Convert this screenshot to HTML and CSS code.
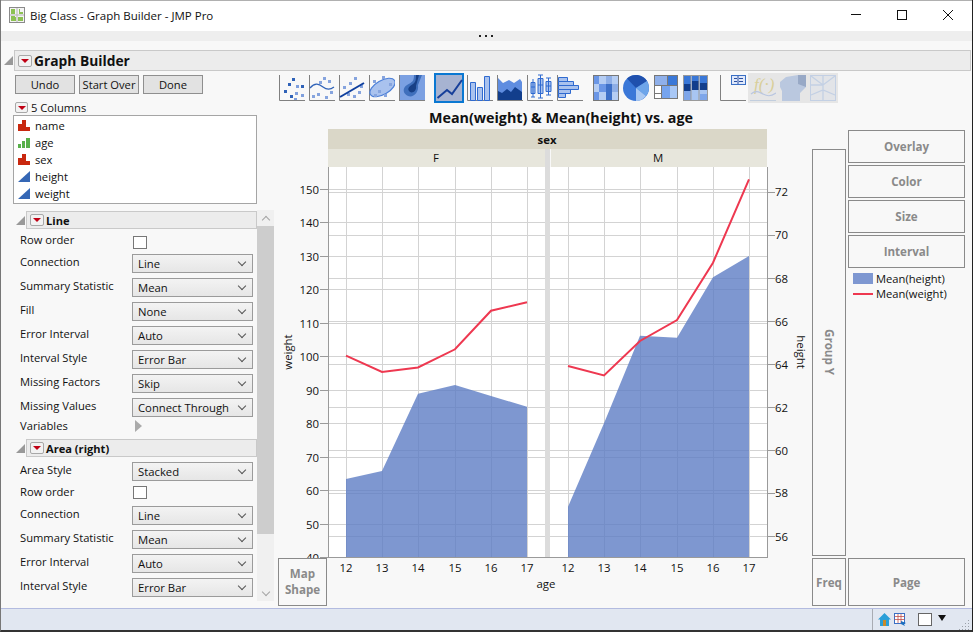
FILE: index.html
```html
<!DOCTYPE html>
<html lang="en">
<head>
<meta charset="utf-8">
<title>Big Class - Graph Builder - JMP Pro</title>
<link rel="stylesheet" href="styles.css">
</head>
<body>
<div class="win">
  <header class="titlebar">
    <svg class="appicon" width="16" height="16" viewBox="0 0 16 16"><rect x=".5" y=".5" width="15" height="15" fill="#f4f4f4" stroke="#8a8a8a"/><path d="M2 2h4v5H2zM10 2h1v3h3v2h-4zM2 9h4v1h1v4H2zM9 10h5v4H9z" fill="#8cc152"/><path d="M8 1v14M1 8h14" stroke="#b5b5b5"/></svg>
    <span class="wintitle">Big Class - Graph Builder - JMP Pro</span>
    <div class="winctl">
      <svg width="12" height="12" viewBox="0 0 12 12"><path d="M1 5.500H11" stroke="#111"/></svg>
      <svg width="12" height="12" viewBox="0 0 12 12"><rect x="1.500" y="1.500" width="9" height="9" fill="none" stroke="#111"/></svg>
      <svg width="12" height="12" viewBox="0 0 12 12"><path d="M1 1L11 11M11 1L1 11" stroke="#111"/></svg>
    </div>
  </header>
  <div class="dotsbar"><svg width="16" height="3" viewBox="0 0 16 3"><path d="M0 0h2v2H0zM6 0h2v2H6zM12 0h2v2h-2z" fill="#222"/></svg></div>

  <main class="content">
    <div class="outline-row">
      <span class="disc"></span>
      <div class="gbhead"><span class="menu"></span><b>Graph Builder</b></div>
    </div>
    <div class="work">
      <section class="left">
        <div class="btns"><button class="btn">Undo</button><button class="btn">Start Over</button><button class="btn">Done</button></div>
        <div class="colshead"><span class="menu small"></span><span>5 Columns</span></div>
        <ul class="collist">
          <li><svg class="ci" viewBox="0 0 12 11"><path d="M0 4h4V0h4v7h4v4H0z" fill="#c9280f"/></svg><span>name</span></li>
          <li><svg class="ci" viewBox="0 0 12 11"><path d="M0 7h3v4H0zM4 4h3v7H4zM8 1h4v10H8z" fill="#58b04a"/></svg><span>age</span></li>
          <li><svg class="ci" viewBox="0 0 12 11"><path d="M0 4h4V0h4v7h4v4H0z" fill="#c9280f"/></svg><span>sex</span></li>
          <li><svg class="ci" viewBox="0 0 12 11"><path d="M0 11L12 0v11z" fill="#3567b5"/></svg><span>height</span></li>
          <li><svg class="ci" viewBox="0 0 12 11"><path d="M0 11L12 0v11z" fill="#3567b5"/></svg><span>weight</span></li>
        </ul>
        <div class="panelwrap">
          <div class="panel">
            <div class="sechead"><span class="disc"></span><div class="sectitle"><span class="menu"></span><b>Line</b></div></div>
            <div class="rows first">
              <div class="row check"><label>Row order</label><span class="cb"></span></div>
              <div class="row"><label>Connection</label><div class="combo">Line</div></div>
              <div class="row"><label>Summary Statistic</label><div class="combo">Mean</div></div>
              <div class="row"><label>Fill</label><div class="combo">None</div></div>
              <div class="row"><label>Error Interval</label><div class="combo">Auto</div></div>
              <div class="row"><label>Interval Style</label><div class="combo">Error Bar</div></div>
              <div class="row"><label>Missing Factors</label><div class="combo">Skip</div></div>
              <div class="row"><label>Missing Values</label><div class="combo">Connect Through</div></div>
              <div class="row vars"><label>Variables</label><span class="play"></span></div>
            </div>
            <div class="sechead"><span class="disc"></span><div class="sectitle"><span class="menu"></span><b>Area (right)</b></div></div>
            <div class="rows second">
              <div class="row"><label>Area Style</label><div class="combo">Stacked</div></div>
              <div class="row check2"><label>Row order</label><span class="cb"></span></div>
              <div class="row"><label>Connection</label><div class="combo">Line</div></div>
              <div class="row"><label>Summary Statistic</label><div class="combo">Mean</div></div>
              <div class="row"><label>Error Interval</label><div class="combo">Auto</div></div>
              <div class="row"><label>Interval Style</label><div class="combo">Error Bar</div></div>
            </div>
          </div>
          <div class="scroll"><span class="sb-up"></span><span class="sb-thumb"></span><span class="sb-track"></span><span class="sb-down"></span></div>
        </div>
      </section>

      <section class="center">
        <div class="toolbar">
          <svg class="ico" viewBox="0 0 26 28"><path d="M.5 2V27.500H26" class="ax"/><path d="M13 5h3v3h-3zM9 10h3v3H9zM22 12h3v3h-3zM5 17h3v3H5zM11 22h3v3h-3z" fill="#2f62b8"/><path d="M17 12h3v3h-3zM16 19h3v3h-3zM22 21h3v3h-3zM15 25h3v2h-3z" fill="#7f9fdd"/></svg>
          <svg class="ico" viewBox="0 0 26 28"><path d="M.5 2V27.500H26" class="ax"/><path d="M14 4h3v3h-3zM19 7h3v3h-3zM8 20h3v3H8zM3 22h3v3H3zM16 23h3v3h-3zM10 8h3v3h-3zM21 18h3v3h-3z" fill="#86a4de"/><path d="M1 15C6 9 10 11 14 14S21 17 25 14" fill="none" stroke="#2f62b8" stroke-width="1.200"/></svg>
          <svg class="ico" viewBox="0 0 26 28"><path d="M.5 2V27.500H26" class="ax"/><path d="M15 4h3v3h-3zM10 9h3v3h-3zM4 13h3v3H4zM21 12h3v3h-3zM8 20h3v3H8zM14 22h3v3h-3zM19 18h3v3h-3z" fill="#86a4de"/><path d="M1 24L25 10" stroke="#0e3f9e" stroke-width="2"/></svg>
          <svg class="ico" viewBox="0 0 26 28"><path d="M.5 2V27.500H26" class="ax"/><ellipse cx="13.500" cy="14.500" rx="14" ry="7" transform="rotate(-30 13.500 14.500)" fill="#a9c2ee" stroke="#4b7fd8" stroke-width="1.200"/><path d="M13 3h3v3h-3zM4 7h3v3H4zM20 10h3v3h-3zM9 17h3v3H9zM15 21h3v3h-3zM5 21h3v3H5z" fill="#86a4de"/></svg>
          <svg class="ico" viewBox="0 0 26 28"><rect y="2" width="26" height="26" fill="#7ba0e2"/><path d="M0 27.500H26M.5 2V28" class="ax"/><path d="M15 2h8L19 12C20 20 14 25 9 23S3 15 8 12 15 9 15 2Z" fill="#3f6fbc"/><path d="M17 2h3L17 13C18 19 12 21 10 18S11 13 14 11 17 6 17 2Z" fill="#173f86"/></svg>
          <svg class="ico sel" viewBox="0 0 30 30"><rect x="1" y="1" width="28" height="28" fill="#a7b3d1" stroke="#0a78d2" stroke-width="2"/><path d="M3.500 25L13 17L18 21L28 7" fill="none" stroke="#173f9a" stroke-width="2"/></svg>
          <svg class="ico" viewBox="0 0 26 28"><path d="M.5 2V27.500H26" class="ax"/><path d="M3.500 9.500h5v18h-5zM10.500 14.500h5v13h-5zM17.500 3.500h5v24h-5z" fill="#a9c2ee" stroke="#2f6ad0"/></svg>
          <svg class="ico" viewBox="0 0 26 28"><path d="M1 5L6 10L12 7L17 10L23 6L25 9V27H1Z" fill="#5f8de0"/><path d="M1 18L5 20L10 16L14 19L18 14L25 19V27H1Z" fill="#123e8c"/><path d="M.5 2V27.500H26" class="ax"/></svg>
          <svg class="ico" viewBox="0 0 26 28"><path d="M.5 2V27.500H26" class="ax"/><path d="M4 9.500h4v11H4zM11 5.500h5v15h-5zM19 8.500h5v10h-5z" fill="#a9c2ee" stroke="#2f6ad0"/><path d="M6 6V24M13.500 2V25M21.500 5V22M4 24h4M11 2h5M11 25h5M19 5h5M19 22h5M4 14h4M11 12h5M19 13h5" stroke="#2f6ad0" fill="none"/></svg>
          <svg class="ico" viewBox="0 0 26 28"><path d="M.5 2V27.500H26" class="ax"/><path d="M1.500 4.500h9v4h-9zM1.500 8.500h15v4h-15zM1.500 12.500h20v4h-20zM1.500 16.500h12v4h-12zM1.500 20.500h7v4h-7z" fill="#a9c2ee" stroke="#2f6ad0"/></svg>
          <svg class="ico gap" viewBox="0 0 26 28"><path d="M0 2h6v9H0z" fill="#6a96e6"/><path d="M6 2h7v9H6zM19 2h7v9h-7zM0 11h6v8H0zM6 19h7v9H6zM19 19h7v9h-7z" fill="#b5cdf3"/><path d="M13 2h6v9h-6zM19 11h7v8h-7z" fill="#8eaee6"/><path d="M6 11h7v8H6zM0 19h6v9H0z" fill="#6a96e6"/><path d="M13 11h6v17h-6z" fill="#3d70c8"/><rect x=".5" y="2.500" width="25" height="25" fill="none" stroke="#777"/></svg>
          <svg class="ico" viewBox="0 0 26 28"><circle cx="13" cy="15" r="13" fill="#3b78d8"/><path d="M13 15L4 5.500A13 13 0 0 1 24 8Z" fill="#1f50ad"/><path d="M13 15L24 8A13 13 0 0 1 23 23Z" fill="#6da5ea"/><path d="M13 15L23 23A13 13 0 0 1 13 28Z" fill="#a8c8f3"/></svg>
          <svg class="ico tree" viewBox="0 0 24 28"><rect y="2" width="24" height="24" fill="#777"/><path d="M1 3h12v9H1z" fill="#8fb0ea"/><path d="M14 3h9v9h-9z" fill="#3a78d8"/><path d="M8 13h15v12H8z" fill="#a9c8f6"/><path d="M8 13h8v12H8z" fill="#76a4ee"/><path d="M1 13h6v7H1zM1 21h6v4H1z" fill="#fff"/></svg>
          <svg class="ico tree2" viewBox="0 0 25 28"><rect y="2" width="25" height="26" fill="#a8c5f2"/><path d="M1 3h7v8H1zM9 3h7v5H9zM17 3h7v7h-7z" fill="#3a78d8"/><path d="M1 11h7v7H1zM9 8h7v9H9zM17 10h7v7h-7z" fill="#123e8c"/><path d="M1 18h7v9H1zM17 21h7v6h-7z" fill="#7ea6ea"/><path d="M8 2v26M16 2v26M0 2.500H25M.5 2v26M24.500 2v26M0 27.500h25" stroke="#9a9a9a"/></svg>
          <svg class="ico gap2" viewBox="0 0 26 28"><path d="M.5 2V27.500H26" class="ax"/><rect x="11.500" y="2.500" width="14" height="9" fill="#dfe8fa" stroke="#3a6fc4"/><path d="M14 5.500h3M14 8.500h3M19 5.500h4M19 8.500h4M18 3v8" stroke="#2a4fa0"/></svg>
          <div class="disabled">
            <svg class="ico" viewBox="0 0 26 28"><text x="4" y="17" class="fx">f(·)</text><path d="M1 21C6 17 9 19 13 21S20 24 26 20" fill="none" stroke="#b9c6e0" stroke-width="1.200"/><path d="M0 27.500H26" stroke="#c2cede"/></svg>
            <svg class="ico" viewBox="0 0 26 28"><path d="M6 4L18 2H26V14L20 20V28H2V18L0 14V9Z" fill="#bac8df"/><path d="M18 2H26V14L18 11Z" fill="#98a9c6"/></svg>
            <svg class="ico" viewBox="0 0 26 28"><rect x=".5" y="2.500" width="25" height="25" fill="#e2e4e8" stroke="#c3d0e4"/><path d="M1 3L13 12L25 3M1 22L13 17L25 22M1 12L13 12M13 2V28" stroke="#c3d0e4" fill="none" stroke-width="1.300"/></svg>
          </div>
        </div>
        <h1 class="gtitle">Mean(weight) &amp; Mean(height) vs. age</h1>
        <div class="chartstack">
          <svg class="chart" viewBox="278 129 532 479" width="532" height="479">
            <rect x="328" y="129" width="439" height="20" fill="#dad7c8"/>
            <rect x="328" y="149" width="217" height="18" fill="#e7e6dc"/>
            <rect x="551" y="149" width="216" height="18" fill="#e7e6dc"/>
            <text x="547" y="143.500" class="t b m">sex</text>
            <text x="436" y="162" class="t m">F</text>
            <text x="658" y="162" class="t m">M</text>
            <rect x="329" y="167" width="438" height="390" fill="#fff"/>
            <path class="grid" d="M320 189.500H767M320 222.500H767M320 256.500H767M320 289.500H767M320 323.500H767M320 356.500H767M320 390.500H767M320 423.500H767M320 457.500H767M320 490.500H767M320 524.500H767
            M329 192.500H775M329 235.500H775M329 278.500H775M329 321.500H775M329 364.500H775M329 407.500H775M329 450.500H775M329 493.500H775M329 536.500H775
            M346.500 167V557M382.500 167V557M418.500 167V557M455.500 167V557M491.500 167V557M527.500 167V557M568.500 167V557M604.500 167V557M640.500 167V557M677.500 167V557M713.500 167V557M749.500 167V557"/>
            <path class="area" d="M346 479L382 471L418 393.700L455 385L491 396L527 406.700V557H346Z"/>
            <path class="area" d="M568 506.700L604 423.300L640 335.700L677 337.700L713 277.300L749 256V557H568Z"/>
            <path class="redl" d="M346 355.700L382 372L418 367.500L455 349.300L491 310.700L527 302.300"/>
            <path class="redl" d="M568 366L604 375.500L640 341L677 320L713 262.700L749 179.300"/>
            <rect x="545" y="149" width="5" height="408" fill="#dcdcdc"/>
            <path class="axis" d="M328.500 167V557.500H767.500V167"/>
            <path class="axis" d="M320 189.500H328M320 222.500H328M320 256.500H328M320 289.500H328M320 323.500H328M320 356.500H328M320 390.500H328M320 423.500H328M320 457.500H328M320 490.500H328M320 524.500H328M320 557.500H328M768 192.500H775M768 235.500H775M768 278.500H775M768 321.500H775M768 364.500H775M768 407.500H775M768 450.500H775M768 493.500H775M768 536.500H775"/>
            <g class="t e">
              <text x="319" y="194">150</text><text x="319" y="227">140</text><text x="319" y="261">130</text><text x="319" y="294">120</text><text x="319" y="328">110</text><text x="319" y="361">100</text><text x="319" y="395">90</text><text x="319" y="428">80</text><text x="319" y="462">70</text><text x="319" y="495">60</text><text x="319" y="529">50</text><text x="319" y="562">40</text>
            </g>
            <g class="t">
              <text x="775" y="196">72</text><text x="775" y="239">70</text><text x="775" y="283">68</text><text x="775" y="326">66</text><text x="775" y="369">64</text><text x="775" y="412">62</text><text x="775" y="455">60</text><text x="775" y="497">58</text><text x="775" y="541">56</text>
            </g>
            <g class="t m">
              <text x="346" y="572">12</text><text x="382" y="572">13</text><text x="418" y="572">14</text><text x="455" y="572">15</text><text x="491" y="572">16</text><text x="527" y="572">17</text>
              <text x="568" y="572">12</text><text x="604" y="572">13</text><text x="640" y="572">14</text><text x="677" y="572">15</text><text x="713" y="572">16</text><text x="749" y="572">17</text>
              <text x="546" y="588">age</text>
              <text transform="translate(292 352) rotate(-90)">weight</text>
              <text transform="translate(797 352) rotate(90)">height</text>
            </g>
          </svg>
          <div class="zone mapshape">Map<br>Shape</div>
        </div>
      </section>

      <aside class="right">
        <div class="zone groupy"><span>Group Y</span></div>
        <div class="rightstack">
          <div class="zone rz">Overlay</div>
          <div class="zone rz">Color</div>
          <div class="zone rz">Size</div>
          <div class="zone rz">Interval</div>
          <div class="legend">
            <div class="lg"><i class="sw"></i><span>Mean(height)</span></div>
            <div class="lg"><i class="ln"></i><span>Mean(weight)</span></div>
          </div>
        </div>
        <div class="zone">Freq</div>
        <div class="zone">Page</div>
      </aside>
    </div>
  </main>

  <footer class="status">
    <div class="stat-right">
      <svg width="13" height="13" viewBox="0 0 13 13"><path d="M6.500 0L13 6.500H11V13H2V6.500H0Z" fill="#2a9fd8"/><path d="M5 7h3v6H5z" fill="#c98a2a"/></svg>
      <svg width="13" height="13" viewBox="0 0 13 13"><rect x=".5" y=".5" width="10" height="10" fill="#fff" stroke="#3a6fc4"/><path d="M.5 3.500h10M.5 6.500h10M4 1v9M7 1v9" stroke="#c0504d" stroke-width=".8"/><path d="M7 8l5 2-2 1 1 2-4-2z" fill="#1d6fc0"/></svg>
      <span class="whitebox"></span>
      <span class="drop"></span>
      <svg class="grip" width="12" height="10" viewBox="0 0 12 10"><path d="M10 0h1v1h-1zM7 3h1v1H7zM10 3h1v1h-1zM4 6h1v1H4zM7 6h1v1H7zM10 6h1v1h-1zM1 9h1v1H1zM4 9h1v1H4zM7 9h1v1H7zM10 9h1v1h-1z" fill="#9aa0a8"/></svg>
    </div>
  </footer>
</div>
</body>
</html>
```
FILE: styles.css
```css
* { box-sizing: border-box; }
html, body { margin: 0; padding: 0; background: #444; }
body { font-family: "Open Sans", "Noto Sans", sans-serif; font-size: 11.2px; color: #111; }
.win {
  width: 973px; height: 632px; display: flex; flex-direction: column; overflow: hidden;
  background: #f8f8f8; border-left: 1px solid #777; border-right: 1px solid #222; border-bottom: 2px solid #333;
}
.titlebar { height: 31px; flex: none; background: #fff; border-top: 1px solid #b0b0b0; display: flex; align-items: center; padding-left: 8px; }
.appicon { margin-top: -2px; }
.wintitle { margin-left: 5px; margin-top: -1px; font-size: 11.5px; }
.winctl { margin-left: auto; display: flex; gap: 34px; margin-right: 18px; margin-top: -3px; }
.dotsbar { height: 10px; flex: none; background: #eee; display: flex; justify-content: center; align-items: center; }

.content { flex: 1; min-height: 0; padding-top: 9px; display: flex; flex-direction: column; }
.outline-row { display: flex; align-items: center; height: 21px; padding-left: 3px; padding-right: 1px; }
.disc { width: 0; height: 0; flex: none; display: block; border-style: solid; border-width: 0 0 9px 9px; border-color: transparent transparent #999 transparent; margin-right: 1px; }
.gbhead { flex: 1; height: 21px; background: #ececec; border: 1px solid #c9c9c9; display: flex; align-items: center; padding-left: 3px; font-size: 13.8px; }
.gbhead b { margin-left: 2px; }
.menu { width: 14px; height: 12px; flex: none; display: inline-flex; align-items: center; justify-content: center; background: #f2f2f2; border: 1px solid #a8a8a8; border-radius: 2px; }
.menu::after { content: ""; border-style: solid; border-width: 4px 4px 0 4px; border-color: #c00014 transparent transparent transparent; }
.menu.small { width: 13px; height: 11px; }

.work { flex: 1; min-height: 0; display: flex; }
.left { width: 277px; flex: none; padding-top: 4px; }
.btns { display: flex; gap: 4px; padding-left: 14px; }
.btn { width: 60px; height: 19px; padding: 0; font: inherit; font-size: 11.2px; color: #111; background: #e2e2e2; border: 1px solid #8f8f8f; }
.colshead { display: flex; align-items: center; gap: 3px; height: 15px; margin-top: 6px; padding-left: 14px; }
.collist { list-style: none; margin: 0 0 0 12px; padding: 1px 0 0 4px; width: 244px; height: 89px; background: #fff; border: 1px solid #a5a5a5; }
.collist li { display: flex; align-items: center; height: 17px; gap: 5px; }
.ci { width: 12px; height: 11px; flex: none; }

.panelwrap { display: flex; margin-top: 6px; height: 391px; }
.panel { width: 256px; flex: none; padding-top: 1px; overflow: hidden; }
.sechead { display: flex; align-items: center; height: 18px; padding-left: 15px; }
.sectitle { flex: 1; height: 18px; background: #ececec; border: 1px solid #c9c9c9; display: flex; align-items: center; gap: 2px; padding-left: 3px; font-size: 11.1px; }
.rows { padding-left: 19px; }
.row { display: grid; grid-template-columns: 112px 121px; height: 24px; }
.row label { height: 16px; line-height: 16px; white-space: nowrap; }
.combo { height: 19px; line-height: 17px; padding-left: 5px; background: linear-gradient(#f3f3f3, #e6e6e6); border: 1px solid #9b9b9b; position: relative; font-size: 11.3px; }
.combo::after { content: ""; position: absolute; right: 7px; top: 4px; width: 5px; height: 5px; border-right: 1px solid #555; border-bottom: 1px solid #555; transform: rotate(45deg); }
.cb { width: 14px; height: 13px; margin-left: 1px; background: #fff; border: 1px solid #777; display: block; }
.row.check { height: 25px; }
.row.check label { margin-top: 3px; }
.row.check .cb { margin-top: 7px; }
.row.vars { height: 17px; }
.row.vars label { margin-top: -4px; }
.play { width: 0; height: 0; margin: -2px 0 0 3px; border-style: solid; border-width: 6px 0 6px 7px; border-color: transparent transparent transparent #aaa; }
.rows.second { padding-top: 5px; }
.row.check2 { height: 20px; }
.row.check2 label { margin-top: -2px; }
.row.check2 .cb { margin-top: 0; }

.scroll { width: 17px; flex: none; background: #f0f0f0; display: flex; flex-direction: column; align-items: center; }
.sb-up, .sb-down { height: 16px; width: 100%; flex: none; display: flex; align-items: center; justify-content: center; }
.sb-up::after, .sb-down::after { content: ""; width: 5px; height: 5px; border-left: 1px solid #a5a5a5; border-top: 1px solid #a5a5a5; transform: rotate(45deg); margin-top: 3px; }
.sb-down::after { transform: rotate(225deg); margin-top: -3px; }
.sb-thumb { width: 100%; height: 308px; flex: none; background: #cdcdcd; }
.sb-track { flex: 1; }

.center { width: 532px; flex: none; padding-top: 2px; }
.toolbar { display: flex; height: 30px; padding-left: 1px; gap: 4px; align-items: flex-start; }
.ico { width: 26px; height: 28px; flex: none; display: block; }
.ax { fill: none; stroke: #808080; }
.ico.sel { width: 30px; height: 30px; margin: 0 -1px 0 5px; }
.ico.gap { margin-left: 6px; }
.ico.tree { width: 24px; margin-left: 1px; }
.ico.tree2 { width: 25px; margin-left: 1px; }
.ico.gap2 { margin-left: 8px; }
.disabled { display: flex; gap: 4px; margin-left: -2px; background: #e6e6e6; padding: 0 2px; height: 30px; }
.fx { font-family: "Liberation Serif", serif; font-style: italic; font-size: 17px; fill: #d9cf9a; }
.gtitle { margin: 6px 0 2px; height: 18px; line-height: 18px; font-size: 14.3px; font-weight: 700; text-align: center; padding-left: 34px; white-space: nowrap; }
.chartstack { display: grid; height: 479px; }
.chart, .mapshape { grid-area: 1 / 1; }
.chart { display: block; }
.mapshape { align-self: end; width: 49px; height: 48px; margin-bottom: 2px; background: #f8f8f8; line-height: 16px; }
.t, .t text { font-family: "Open Sans", "Noto Sans", sans-serif; font-size: 11.4px; fill: #111; }
.b { font-weight: 700; }
.m, .m text { text-anchor: middle; }
.e, .e text { text-anchor: end; }
.grid { fill: none; stroke: #d3d3d3; stroke-width: 1; shape-rendering: crispEdges; }
.axis { fill: none; stroke: #9a9a9a; stroke-width: 1; shape-rendering: crispEdges; }
.area { fill: #5e7dc4; fill-opacity: .8; }
.redl { fill: none; stroke: #ee3850; stroke-width: 2; }

.zone { border: 1px solid #8a8a8a; display: flex; align-items: center; justify-content: center; text-align: center; font-weight: 700; color: #8a8a8a; font-size: 11.6px; }
.right { margin-left: 2px; width: 153px; flex: none; display: grid; grid-template-columns: 34px 117px; grid-template-rows: 426px 48px; column-gap: 2px; row-gap: 2px; padding-top: 59px; height: 535px; }
.groupy { margin-top: 19px; }
.groupy span { writing-mode: vertical-rl; }
.rightstack { display: flex; flex-direction: column; gap: 2px; }
.rz { height: 33px; flex: none; }
.legend { padding: 1px 0 0 5px; }
.lg { display: flex; align-items: center; gap: 3px; height: 15px; white-space: nowrap; }
.sw { width: 20px; height: 11px; background: #7e97d1; display: block; }
.ln { width: 20px; height: 2px; background: #ee3850; display: block; }

.status { height: 22px; flex: none; background: #e1e7f1; border-top: 1px solid #b3bbe0; display: flex; justify-content: flex-end; }
.stat-right { width: 100px; border-left: 1px solid #a9acb3; display: flex; align-items: center; padding-left: 5px; gap: 3px; }
.whitebox { width: 14px; height: 13px; margin-left: 8px; background: #fff; border: 1px solid #666; }
.drop { margin-left: 3px; margin-top: -3px; border-style: solid; border-width: 6px 4px 0 4px; border-color: #111 transparent transparent transparent; }
.grip { margin-left: auto; margin-right: 2px; align-self: flex-end; }
```
